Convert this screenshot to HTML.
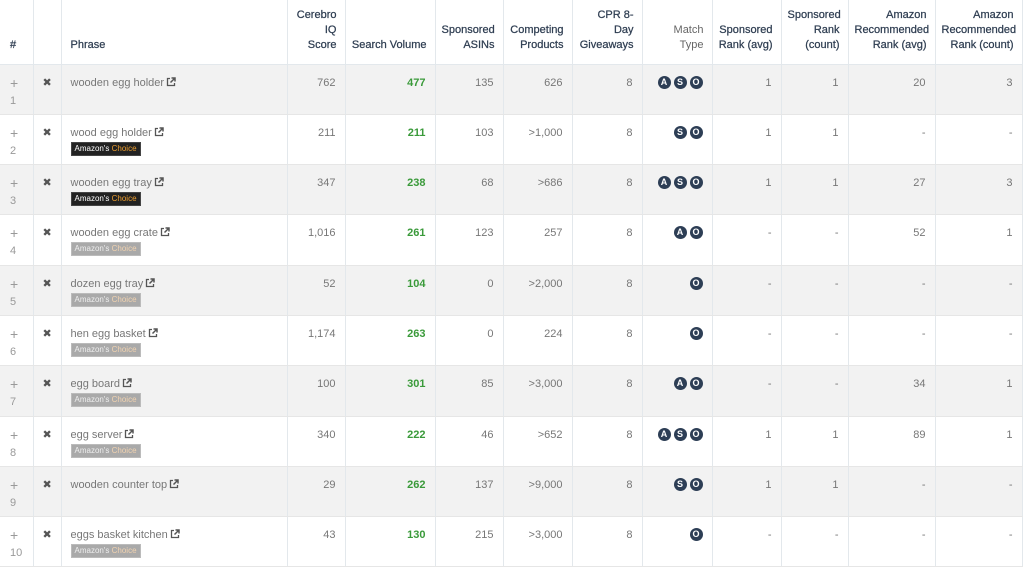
<!DOCTYPE html>
<html><head><meta charset="utf-8"><style>
*{box-sizing:border-box;margin:0;padding:0}
body{width:1024px;height:567px;overflow:hidden;background:#fff;font-family:"Liberation Sans",sans-serif;}
table{border-collapse:collapse;table-layout:fixed;width:1022px}
th,td{border-right:1px solid #e3e8ec;padding:0 9px;vertical-align:top}
th{height:64px;vertical-align:bottom;padding:0 8px 11px 6px;font-weight:normal;color:#2f3e52;font-size:11px;line-height:15px;text-align:right;border-bottom:1px solid #e3e8ec;-webkit-text-stroke:0.25px #2f3e52}
th.l{text-align:left}
td{height:50.3px;padding-top:10px;font-size:11px;line-height:16px;color:#777;text-align:right;border-bottom:1px solid #e6e6e6;white-space:nowrap;overflow:hidden}
tr.g td{background:#f2f2f2}
td.n{text-align:left;color:#999;padding-left:10px}
td.n b{font-weight:normal;font-size:14px;line-height:16px}
td.x{text-align:center;color:#555;font-size:11px}
td.p{text-align:left;color:#777}
td.v{color:#3a9a3a;font-weight:bold}
.b{display:inline-block;height:14px;line-height:12px;font-size:8px;padding:0 3px;margin-top:1px;color:#fff;background:#222;border:1px solid #444;white-space:nowrap;vertical-align:top}
.b span{color:#f0a030}
.b.gr{background:#a9a9a9;border-color:#bbb;color:#eee}
.b.gr span{color:#f2d3b0}
.c{display:inline-block;width:13px;height:13px;border-radius:50%;background:#2d3e55;color:#fff;font-size:9px;line-height:13px;text-align:center;font-weight:bold;margin-left:3px;vertical-align:top;margin-top:1px}
.e{display:inline-block;width:10px;height:10px;margin-left:2px;vertical-align:-1px}
</style></head><body>
<table>
<colgroup><col style="width:33px"><col style="width:28px"><col style="width:226px"><col style="width:58px"><col style="width:90px"><col style="width:68px"><col style="width:69px"><col style="width:70px"><col style="width:70px"><col style="width:69px"><col style="width:67px"><col style="width:87px"><col style="width:87px"></colgroup>
<tr><th class="l" style="padding-left:10px">#</th><th></th><th class="l" style="padding-left:9px">Phrase</th><th>Cerebro<br>IQ<br>Score</th><th style="white-space:nowrap">Search Volume</th><th>Sponsored<br>ASINs</th><th>Competing<br>Products</th><th>CPR 8-<br>Day<br>Giveaways</th><th style="-webkit-text-stroke:0;color:#666">Match<br>Type</th><th style="white-space:nowrap">Sponsored<br>Rank (avg)</th><th>Sponsored<br>Rank<br>(count)</th><th style="white-space:nowrap">Amazon<br>Recommended<br>Rank (avg)</th><th style="white-space:nowrap">Amazon<br>Recommended<br>Rank (count)</th></tr>
<tbody id="b"></tbody>
</table>
<script>
var E='<svg class="e" viewBox="0 0 10 10"><path d="M4 1.5H1.5v7h7V6" fill="none" stroke="#555" stroke-width="1.3"/><path d="M5.5 1H9v3.5M9 1L4.5 5.5" fill="none" stroke="#555" stroke-width="1.5"/></svg>';
var R=[["wooden egg holder",0,762,477,135,626,"ASO",1,1,20,3],
["wood egg holder",1,211,211,103,">1,000","SO",1,1,"-","-"],
["wooden egg tray",1,347,238,68,">686","ASO",1,1,27,3],
["wooden egg crate",2,"1,016",261,123,257,"AO","-","-",52,1],
["dozen egg tray",2,52,104,0,">2,000","O","-","-","-","-"],
["hen egg basket",2,"1,174",263,0,224,"O","-","-","-","-"],
["egg board",2,100,301,85,">3,000","AO","-","-",34,1],
["egg server",2,340,222,46,">652","ASO",1,1,89,1],
["wooden counter top",0,29,262,137,">9,000","SO",1,1,"-","-"],
["eggs basket kitchen",2,43,130,215,">3,000","O","-","-","-","-"]];
var h='';R.forEach(function(r,i){
var b=r[1]==1?'<br><span class="b">Amazon\'s <span>Choice</span></span>':r[1]==2?'<br><span class="b gr">Amazon\'s <span>Choice</span></span>':'';
var m=r[6].split('').map(function(c){return '<span class="c">'+c+'</span>'}).join('');
h+='<tr class="'+(i%2?'':'g')+'"><td class="n"><b>+</b><br>'+(i+1)+'</td><td class="x">&#10006;</td><td class="p">'+r[0]+E+b+'</td><td>'+r[2]+'</td><td class="v">'+r[3]+'</td><td>'+r[4]+'</td><td>'+r[5]+'</td><td>8</td><td>'+m+'</td><td>'+r[7]+'</td><td>'+r[8]+'</td><td>'+r[9]+'</td><td>'+r[10]+'</td></tr>';});
document.getElementById('b').innerHTML=h;
</script>
</body></html>
